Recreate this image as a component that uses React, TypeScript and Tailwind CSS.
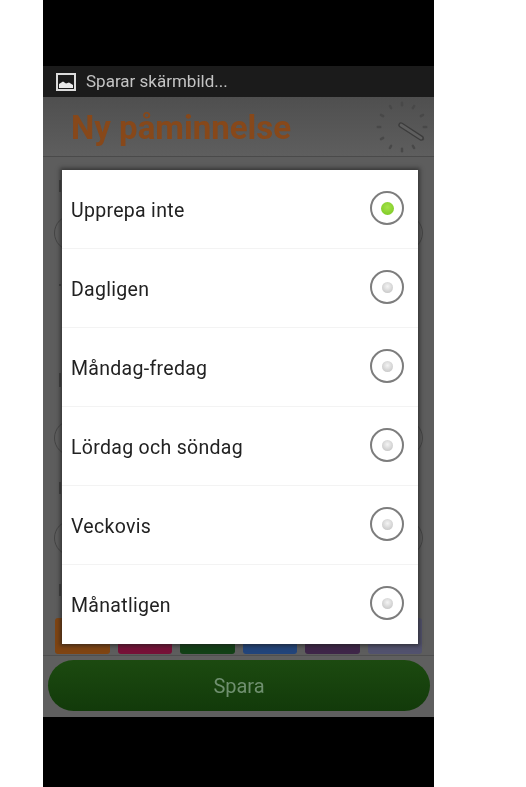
const options = ['Upprepa inte', 'Dagligen', 'Måndag-fredag', 'Lördag och söndag', 'Veckovis', 'Månatligen']

const swatches = ['bg-[#7f4412]', 'bg-[#761137]', 'bg-[#124016]', 'bg-[#22447a]', 'bg-[#3e2648]', 'bg-[#52526e]']

function ClockIcon() {
    const ticks = Array.from({ length: 12 }, (_, i) => i * 30)
    return (
        <svg width="54" height="54" viewBox="0 0 54 54">
            {ticks.map((a) => (
                <rect key={a} x="25.8" y="1.5" width="2.4" height="5" rx="1.2" fill="#484848" transform={`rotate(${a} 27 27)`} />
            ))}
            <rect x="24" y="23" width="28" height="4" rx="2" fill="#5f5f5f" stroke="#3c3c3c" strokeWidth="1.3" transform="rotate(33 26 25)" />
        </svg>
    )
}

function ImageIcon() {
    return (
        <svg width="20" height="18" viewBox="0 0 20 18">
            <rect x="1" y="1" width="18" height="16" fill="#1c1c1c" stroke="#dcdcdc" strokeWidth="2" />
            <path d="M3 15 L3 11 L7 8.5 L10 10.5 L13 9.5 L17 12 L17 15 Z" fill="#ececec" />
        </svg>
    )
}

function Radio({ checked }: { checked: boolean }) {
    return (
        <div className="mb-[2px] flex h-[34px] w-[34px] items-center justify-center rounded-full border-2 border-[#7d7d7d] bg-white">
            {checked ? (
                <div className="h-[13px] w-[13px] rounded-full bg-[radial-gradient(circle_at_50%_40%,#a6e34a,#76c51f)]" />
            ) : (
                <div className="h-[11px] w-[11px] rounded-full bg-[radial-gradient(circle_at_50%_40%,#f4f4f4,#bdbdbd)]" />
            )}
        </div>
    )
}

function GhostField() {
    return <div className="mx-[11px] h-[36px] rounded-full border border-[#444]" />
}

function GhostLabel({ className }: { className: string }) {
    return <div className={`ml-[16px] w-[2px] bg-[#404040] ${className}`} />
}

export default function App() {
    return (
        <div className="h-[787px] w-[526px] overflow-hidden bg-white font-['Roboto',sans-serif]">
            <div className="relative ml-[43px] flex h-[787px] w-[391px] flex-col bg-black pt-[66px] pb-[70px] blur-[0.4px]">
                <div className="flex h-[31px] items-center gap-[10px] bg-[#1b1b1b] pl-[13px]">
                    <ImageIcon />
                    <span className="text-[17px] text-[#c4c4c4]">Sparar skärmbild...</span>
                </div>
                <div className="flex h-[60px] items-center justify-between border-b border-[#4a4a4a] bg-[linear-gradient(#4f4f4f,#5e5e5e)] pr-[5px] pl-[28px]">
                    <span className="pt-[3px] text-[33px] font-bold text-[#87481a]">Ny påminnelse</span>
                    <ClockIcon />
                </div>
                <div className="flex min-h-0 flex-1 flex-col overflow-hidden bg-[#5d5d5d]">
                    <GhostLabel className="mt-[23px] h-[12px]" />
                    <div className="mt-[23px]">
                        <GhostField />
                    </div>
                    <GhostLabel className="mt-[33px] h-[2px]" />
                    <GhostLabel className="mt-[87px] h-[14px]" />
                    <div className="mt-[33px]">
                        <GhostField />
                    </div>
                    <GhostLabel className="mt-[26px] h-[12px]" />
                    <div className="mt-[26px]">
                        <GhostField />
                    </div>
                    <GhostLabel className="mt-[28px] h-[12px]" />
                    <div className="mt-[22px] flex gap-[8px] px-[12px]">
                        {swatches.map((c) => (
                            <div key={c} className={`h-[36px] flex-1 rounded-[3px] ${c}`} />
                        ))}
                    </div>
                </div>
                <div className="h-[62px] border-t border-[#4f4f4f] bg-[#5f5f5f] pt-[4px] pr-[4px] pl-[5px]">
                    <div className="flex h-[51px] w-full items-center justify-center rounded-full bg-[linear-gradient(#1c4a10,#123a0a)] text-[20px] text-[#6f8f6f]">
                        Spara
                    </div>
                </div>
                <div className="absolute top-[170px] left-[19px] w-[356px] bg-white shadow-[0_0_4px_2px_rgba(30,30,30,0.6)]">
                    {options.map((label, i) => (
                        <div
                            key={label}
                            className={`flex h-[79px] items-center justify-between border-b pr-[14px] pl-[9px] ${i < options.length - 1 ? 'border-[#f3f3f3]' : 'border-transparent'}`}>
                            <span className="pt-[4px] text-[19.5px] tracking-[0.3px] text-[#222]">{label}</span>
                            <Radio checked={i === 0} />
                        </div>
                    ))}
                </div>
            </div>
        </div>
    )
}
